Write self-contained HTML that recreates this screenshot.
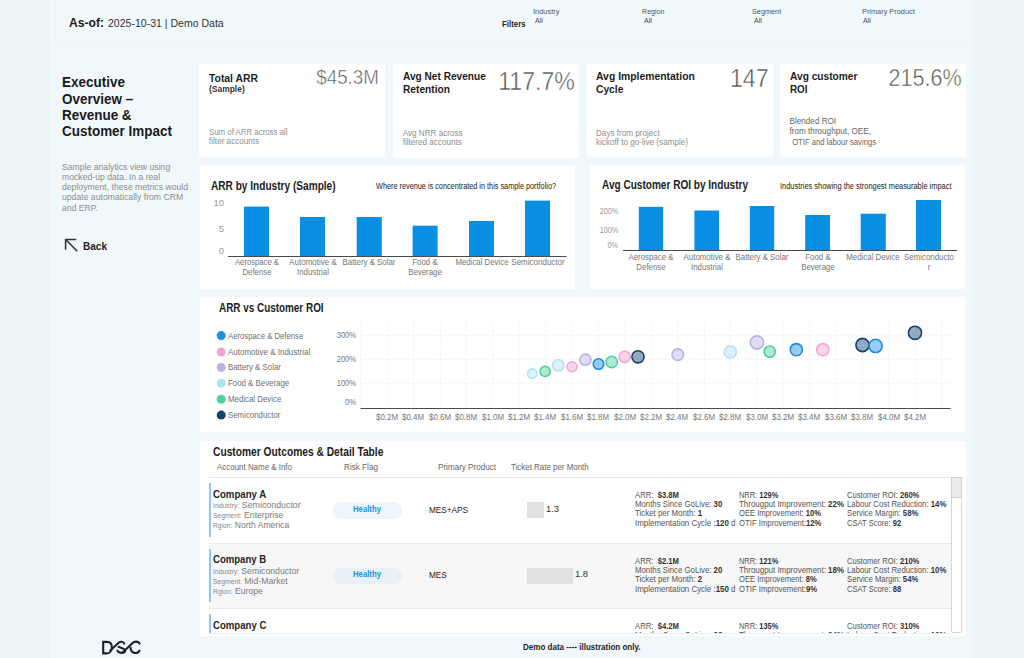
<!DOCTYPE html>
<html><head><meta charset="utf-8"><title>Executive Overview</title>
<style>
*{margin:0;padding:0;box-sizing:border-box}
html,body{width:1024px;height:658px;overflow:hidden}
body{background:#eef5f9;font-family:"Liberation Sans",sans-serif;position:relative}
.main{position:absolute;left:50px;top:0;width:923px;height:658px;background:#f1f8fc}
.hdr{position:absolute;left:54.5px;top:1px;width:916px;height:42px;background:#f2f9fc;border:1px solid #edf3f7;border-top-color:#f0f6fa;border-right-color:#f0f7fb}
.card{position:absolute;background:#fff}
.t{position:absolute;white-space:nowrap;line-height:1;}
.ov{position:absolute;left:0;top:0}
.row{position:absolute;left:208.6px;width:742.8px}
.lb{position:absolute;left:209px;width:1.5px;background:#8cc8f2}
.pill{position:absolute;left:333px;width:69px;height:16.5px;border-radius:8px}
.tbar{position:absolute;left:526.6px;background:#e1e1e1}
</style></head><body>
<div class="main"></div>
<div class="hdr"></div>
<!-- KPI cards -->
<div class="card" style="left:199px;top:64px;width:186px;height:93px"></div>
<div class="card" style="left:393px;top:64px;width:186px;height:94px"></div>
<div class="card" style="left:586.5px;top:64px;width:186px;height:92.7px"></div>
<div class="card" style="left:780px;top:64px;width:186px;height:93px"></div>
<!-- chart cards -->
<div class="card" style="left:199.5px;top:165px;width:375.2px;height:124.4px"></div>
<div class="card" style="left:589.5px;top:165px;width:375.9px;height:124.4px"></div>
<div class="card" style="left:199.5px;top:296.7px;width:765.5px;height:135.7px"></div>
<!-- table card -->
<div class="card" style="left:199.5px;top:441px;width:766px;height:195px"></div>
<div class="row" style="top:632.8px;height:1px;background:#ececec"></div>
<div class="row" style="top:477px;height:1px;background:#e6e6e6"></div>
<div class="row" style="top:543px;height:66px;background:#f7f7f7;border-top:1px solid #e9e9e9;border-bottom:1px solid #e9e9e9"></div>
<div class="lb" style="top:483px;height:53.6px"></div>
<div class="lb" style="top:549px;height:53.4px"></div>
<div class="lb" style="top:614.4px;height:18.6px"></div>
<div class="pill" style="top:502px;background:#edf6fc"></div>
<div class="pill" style="top:567.5px;background:#e7f1f7"></div>
<div class="tbar" style="top:502.4px;width:17px;height:15.2px"></div>
<div class="tbar" style="top:568.3px;width:46.4px;height:15.4px"></div>
<!-- scrollbar -->
<div style="position:absolute;left:951.4px;top:476.9px;width:10.5px;height:156.4px;border:1px solid #d6d6d6;background:#fff;border-radius:2px"></div>
<div style="position:absolute;left:951.4px;top:476.9px;width:10.5px;height:21px;border:1px solid #cfcfcf;background:#ececec"></div>
<svg class="ov" width="1024" height="658" viewBox="0 0 1024 658"><rect x="244.00" y="206.60" width="25.00" height="49.90" fill="#088ee2" /><rect x="300.00" y="217.00" width="25.00" height="39.50" fill="#088ee2" /><rect x="356.70" y="217.00" width="25.10" height="39.50" fill="#088ee2" /><rect x="412.60" y="225.70" width="25.00" height="30.80" fill="#088ee2" /><rect x="469.00" y="221.00" width="25.00" height="35.50" fill="#088ee2" /><rect x="525.00" y="200.60" width="25.00" height="55.90" fill="#088ee2" /><rect x="228" y="256" width="338.5" height="1" fill="#4a4a4a"/><rect x="638.80" y="206.80" width="24.40" height="43.70" fill="#088ee2" /><rect x="694.40" y="210.50" width="24.60" height="40.00" fill="#088ee2" /><rect x="749.80" y="206.00" width="24.40" height="44.50" fill="#088ee2" /><rect x="805.20" y="215.00" width="24.80" height="35.50" fill="#088ee2" /><rect x="860.70" y="213.70" width="25.10" height="36.80" fill="#088ee2" /><rect x="916.00" y="200.00" width="25.00" height="50.50" fill="#088ee2" /><rect x="623" y="250" width="334" height="1" fill="#4a4a4a"/><path d="M360.90 322.5V408 M387.30 322.5V408 M413.70 322.5V408 M440.10 322.5V408 M466.50 322.5V408 M492.90 322.5V408 M519.30 322.5V408 M545.70 322.5V408 M572.10 322.5V408 M598.50 322.5V408 M624.90 322.5V408 M651.30 322.5V408 M677.70 322.5V408 M704.10 322.5V408 M730.50 322.5V408 M756.90 322.5V408 M783.30 322.5V408 M809.70 322.5V408 M836.10 322.5V408 M862.50 322.5V408 M888.90 322.5V408 M915.30 322.5V408 M941.70 322.5V408 M360.6 335.70H950 M360.6 359.30H950 M360.6 383.10H950" stroke="#e6e6e6" stroke-width="0.8" stroke-dasharray="1.5 2.5" fill="none"/><rect x="360.6" y="408" width="590" height="1" fill="#4a4a4a"/><circle cx="221.2" cy="335.60" r="4.5" fill="#1a8ee3"/><circle cx="221.2" cy="352.00" r="4.5" fill="#f5a3d9"/><circle cx="221.2" cy="367.50" r="4.5" fill="#b6b3e6"/><circle cx="221.2" cy="383.20" r="4.5" fill="#b3e0f3"/><circle cx="221.2" cy="399.30" r="4.5" fill="#4fd09e"/><circle cx="221.2" cy="415.10" r="4.5" fill="#15426e"/><circle cx="532.30" cy="373.60" r="4.70" fill="#b3e0f3" fill-opacity="0.45" stroke="#b3e0f3" stroke-width="1.6"/><circle cx="545.10" cy="371.40" r="5.10" fill="#4fd09e" fill-opacity="0.45" stroke="#4fd09e" stroke-width="1.6"/><circle cx="558.30" cy="365.40" r="5.60" fill="#b3e0f3" fill-opacity="0.45" stroke="#b3e0f3" stroke-width="1.6"/><circle cx="572.00" cy="366.70" r="4.90" fill="#f5a3d9" fill-opacity="0.45" stroke="#f5a3d9" stroke-width="1.6"/><circle cx="585.40" cy="359.70" r="5.60" fill="#b6b3e6" fill-opacity="0.45" stroke="#b6b3e6" stroke-width="1.6"/><circle cx="598.50" cy="364.10" r="5.30" fill="#1a8ee3" fill-opacity="0.45" stroke="#1a8ee3" stroke-width="1.6"/><circle cx="611.70" cy="362.00" r="5.60" fill="#4fd09e" fill-opacity="0.45" stroke="#4fd09e" stroke-width="1.6"/><circle cx="624.70" cy="356.80" r="5.60" fill="#f5a3d9" fill-opacity="0.45" stroke="#f5a3d9" stroke-width="1.6"/><circle cx="638.00" cy="356.80" r="6.10" fill="#15426e" fill-opacity="0.45" stroke="#15426e" stroke-width="1.6"/><circle cx="677.80" cy="354.70" r="5.80" fill="#b6b3e6" fill-opacity="0.45" stroke="#b6b3e6" stroke-width="1.6"/><circle cx="730.30" cy="351.90" r="6.10" fill="#b3e0f3" fill-opacity="0.45" stroke="#b3e0f3" stroke-width="1.6"/><circle cx="756.90" cy="342.50" r="6.60" fill="#b6b3e6" fill-opacity="0.45" stroke="#b6b3e6" stroke-width="1.6"/><circle cx="769.70" cy="351.60" r="5.60" fill="#4fd09e" fill-opacity="0.45" stroke="#4fd09e" stroke-width="1.6"/><circle cx="796.30" cy="349.70" r="6.10" fill="#1a8ee3" fill-opacity="0.45" stroke="#1a8ee3" stroke-width="1.6"/><circle cx="822.80" cy="349.70" r="6.10" fill="#f5a3d9" fill-opacity="0.45" stroke="#f5a3d9" stroke-width="1.6"/><circle cx="862.50" cy="345.00" r="6.60" fill="#15426e" fill-opacity="0.45" stroke="#15426e" stroke-width="1.6"/><circle cx="875.60" cy="345.90" r="6.60" fill="#1a8ee3" fill-opacity="0.45" stroke="#1a8ee3" stroke-width="1.6"/><circle cx="915.00" cy="332.80" r="6.60" fill="#15426e" fill-opacity="0.45" stroke="#15426e" stroke-width="1.6"/></svg>
<!-- back arrow -->
<svg class="ov" style="left:60px;top:234px" width="24" height="22" viewBox="0 0 24 22"><path d="M5.6 15.7V5.5H16.2M5.9 5.8L17.3 17.2" stroke="#333" stroke-width="1.6" fill="none"/></svg>
<!-- logo -->
<svg class="ov" style="left:90px;top:630px" width="60" height="28" viewBox="90 630 60 28"><g stroke="#1c222b" stroke-width="2.1" fill="none" stroke-linecap="round"><path d="M103.2 653.4V641.9H107C110.2 641.9 111.9 644.3 111.9 647.4C111.9 650.8 109.8 653.4 106.6 653.4H103.2Z" stroke-linecap="butt"/><path d="M110.3 650.6L118.6 642.8C120.2 641.4 122.9 641.2 124.2 643.6"/><path d="M118.6 646.8L123.6 648.9C126 650 125.6 652.9 122 652.9C119.8 652.9 118.2 652 117.5 650.7"/><path d="M122.6 652.4L132.6 642.9C134.6 641 138.3 641.1 139.6 643.6"/><path d="M130.6 647.6C130.4 650.8 132.6 653 135.4 653C137.4 653 138.8 652 139.5 650.7"/></g></svg>
<div class="t" id="t0" style="top:16.57px;font-size:12.79px;font-weight:700;color:#1b1b1b;left:69.00px;transform:scaleX(0.9479);transform-origin:left;">As-of:</div>
<div class="t" id="t1" style="top:18.54px;font-size:10.47px;font-weight:400;color:#333;left:107.80px;transform:scaleX(1.0057);transform-origin:left;">2025-10-31 | Demo Data</div>
<div class="t" id="t2" style="top:20.37px;font-size:9.01px;font-weight:700;color:#252525;left:502.00px;transform:scaleX(0.8736);transform-origin:left;">Filters</div>
<div class="t" id="t3" style="top:8.82px;font-size:6.83px;font-weight:400;color:#555;left:533.30px;transform:scaleX(1.0866);transform-origin:left;">Industry</div>
<div class="t" id="t4" style="top:18.02px;font-size:6.83px;font-weight:400;color:#444;left:534.50px;transform:scaleX(1.0272);transform-origin:left;">All</div>
<div class="t" id="t5" style="top:8.82px;font-size:6.83px;font-weight:400;color:#555;left:642.10px;transform:scaleX(1.0397);transform-origin:left;">Region</div>
<div class="t" id="t6" style="top:18.02px;font-size:6.83px;font-weight:400;color:#444;left:644.00px;transform:scaleX(1.0272);transform-origin:left;">All</div>
<div class="t" id="t7" style="top:8.82px;font-size:6.83px;font-weight:400;color:#555;left:752.10px;transform:scaleX(1.0679);transform-origin:left;">Segment</div>
<div class="t" id="t8" style="top:18.02px;font-size:6.83px;font-weight:400;color:#444;left:753.70px;transform:scaleX(1.0272);transform-origin:left;">All</div>
<div class="t" id="t9" style="top:8.82px;font-size:6.83px;font-weight:400;color:#555;left:861.60px;transform:scaleX(1.0765);transform-origin:left;">Primary Product</div>
<div class="t" id="t10" style="top:18.02px;font-size:6.83px;font-weight:400;color:#444;left:863.00px;transform:scaleX(1.0272);transform-origin:left;">All</div>
<div class="t" id="t11" style="top:74.74px;font-size:14.24px;font-weight:700;color:#1a1a1a;left:62.00px;transform:scaleX(0.9460);transform-origin:left;">Executive</div>
<div class="t" id="t12" style="top:91.64px;font-size:14.24px;font-weight:700;color:#1a1a1a;left:62.00px;transform:scaleX(0.9460);transform-origin:left;">Overview –</div>
<div class="t" id="t13" style="top:108.44px;font-size:14.24px;font-weight:700;color:#1a1a1a;left:62.00px;transform:scaleX(0.9460);transform-origin:left;">Revenue &amp;</div>
<div class="t" id="t14" style="top:124.24px;font-size:14.24px;font-weight:700;color:#1a1a1a;left:62.00px;transform:scaleX(0.9460);transform-origin:left;">Customer Impact</div>
<div class="t" id="t15" style="top:162.73px;font-size:9.30px;font-weight:400;color:#8c8c8c;left:61.60px;transform:scaleX(0.9306);transform-origin:left;">Sample analytics view using</div>
<div class="t" id="t16" style="top:172.53px;font-size:9.30px;font-weight:400;color:#8c8c8c;left:61.60px;transform:scaleX(0.9306);transform-origin:left;">mocked-up data. In a real</div>
<div class="t" id="t17" style="top:183.23px;font-size:9.30px;font-weight:400;color:#8c8c8c;left:61.60px;transform:scaleX(0.9306);transform-origin:left;">deployment, these metrics would</div>
<div class="t" id="t18" style="top:193.33px;font-size:9.30px;font-weight:400;color:#8c8c8c;left:61.60px;transform:scaleX(0.9306);transform-origin:left;">update automatically from CRM</div>
<div class="t" id="t19" style="top:203.83px;font-size:9.30px;font-weight:400;color:#8c8c8c;left:61.60px;transform:scaleX(0.9306);transform-origin:left;">and ERP.</div>
<div class="t" id="t20" style="top:240.16px;font-size:11.63px;font-weight:700;color:#222;left:82.60px;transform:scaleX(0.8634);transform-origin:left;">Back</div>
<div class="t" id="t21" style="top:72.83px;font-size:11.19px;font-weight:700;color:#1c1c1c;left:209.00px;transform:scaleX(0.9256);transform-origin:left;">Total ARR</div>
<div class="t" id="t22" style="top:67.17px;font-size:20.35px;font-weight:400;color:#505050;right:645.40px;transform:scaleX(0.9210);transform-origin:right;-webkit-text-stroke:0.5px #fff;paint-order:normal;">$45.3M</div>
<div class="t" id="t23" style="top:128.71px;font-size:8.14px;font-weight:400;color:#8f8f8f;left:209.00px;transform:scaleX(0.9658);transform-origin:left;">Sum of ARR across all</div>
<div class="t" id="t24" style="top:138.11px;font-size:8.14px;font-weight:400;color:#8f8f8f;left:209.00px;">filter accounts</div>
<div class="t" id="t25" style="top:71.33px;font-size:11.19px;font-weight:700;color:#1c1c1c;left:402.70px;transform:scaleX(0.9038);transform-origin:left;">Avg Net Revenue</div>
<div class="t" id="t26" style="top:83.53px;font-size:11.19px;font-weight:700;color:#1c1c1c;left:402.70px;transform:scaleX(0.9090);transform-origin:left;">Retention</div>
<div class="t" id="t27" style="top:68.15px;font-size:26.16px;font-weight:400;color:#505050;right:449.40px;transform:scaleX(0.8827);transform-origin:right;-webkit-text-stroke:0.5px #fff;paint-order:normal;">117.7%</div>
<div class="t" id="t28" style="top:129.51px;font-size:8.14px;font-weight:400;color:#8f8f8f;left:402.70px;">Avg NRR across</div>
<div class="t" id="t29" style="top:138.91px;font-size:8.14px;font-weight:400;color:#8f8f8f;left:402.70px;">filtered accounts</div>
<div class="t" id="t30" style="top:71.33px;font-size:11.19px;font-weight:700;color:#1c1c1c;left:596.00px;transform:scaleX(0.9286);transform-origin:left;">Avg Implementation</div>
<div class="t" id="t31" style="top:83.53px;font-size:11.19px;font-weight:700;color:#1c1c1c;left:596.00px;transform:scaleX(0.9176);transform-origin:left;">Cycle</div>
<div class="t" id="t32" style="top:64.85px;font-size:26.16px;font-weight:400;color:#505050;right:255.80px;transform:scaleX(0.8868);transform-origin:right;-webkit-text-stroke:0.5px #fff;paint-order:normal;">147</div>
<div class="t" id="t33" style="top:129.51px;font-size:8.14px;font-weight:400;color:#8f8f8f;left:596.00px;">Days from project</div>
<div class="t" id="t34" style="top:138.91px;font-size:8.14px;font-weight:400;color:#8f8f8f;left:596.00px;">kickoff to go-live (sample)</div>
<div class="t" id="t35" style="top:71.33px;font-size:11.19px;font-weight:700;color:#1c1c1c;left:789.60px;transform:scaleX(0.9097);transform-origin:left;">Avg customer</div>
<div class="t" id="t36" style="top:83.53px;font-size:11.19px;font-weight:700;color:#1c1c1c;left:789.60px;transform:scaleX(0.8798);transform-origin:left;">ROI</div>
<div class="t" id="t37" style="top:65.68px;font-size:24.71px;font-weight:400;color:#505050;right:62.50px;transform:scaleX(0.8735);transform-origin:right;-webkit-text-stroke:0.5px #fff;paint-order:normal;">215.6%</div>
<div class="t" id="t38" style="top:118.21px;font-size:8.14px;font-weight:400;color:#666;left:789.60px;">Blended ROI</div>
<div class="t" id="t39" style="top:128.46px;font-size:8.14px;font-weight:400;color:#666;left:789.60px;">from throughput, OEE,</div>
<div class="t" id="t40" style="top:138.71px;font-size:8.14px;font-weight:400;color:#666;left:789.60px;transform:scaleX(0.9426);transform-origin:left;">&nbsp;OTIF&nbsp;and&nbsp;labour&nbsp;savings</div>
<div class="t" id="t41" style="top:84.82px;font-size:8.72px;font-weight:700;color:#333;left:209.00px;transform:scaleX(0.9694);transform-origin:left;">(Sample)</div>
<div class="t" id="t42" style="top:178.93px;font-size:13.08px;font-weight:700;color:#1c1c1c;left:211.40px;transform:scaleX(0.7723);transform-origin:left;">ARR by Industry (Sample)</div>
<div class="t" id="t43" style="top:183.11px;font-size:8.14px;font-weight:400;color:#222;left:375.90px;transform:scaleX(0.8976);transform-origin:left;">Where revenue is concentrated in this sample portfolio?</div>
<div class="t" id="t44" style="top:198.30px;font-size:9.45px;font-weight:400;color:#999;right:800.00px;">10</div>
<div class="t" id="t45" style="top:224.30px;font-size:9.45px;font-weight:400;color:#999;right:800.00px;">5</div>
<div class="t" id="t46" style="top:245.60px;font-size:9.45px;font-weight:400;color:#999;right:800.00px;">0</div>
<div class="t" id="t47" style="top:258.17px;font-size:9.01px;font-weight:400;color:#777;left:256.50px;transform:translateX(-50%) scaleX(0.8539);transform-origin:50% 0;">Aerospace &amp;</div>
<div class="t" id="t48" style="top:267.77px;font-size:9.01px;font-weight:400;color:#777;left:256.50px;transform:translateX(-50%) scaleX(0.8708);transform-origin:50% 0;">Defense</div>
<div class="t" id="t49" style="top:258.17px;font-size:9.01px;font-weight:400;color:#777;left:312.50px;transform:translateX(-50%) scaleX(0.8929);transform-origin:50% 0;">Automotive &amp;</div>
<div class="t" id="t50" style="top:267.77px;font-size:9.01px;font-weight:400;color:#777;left:312.50px;transform:translateX(-50%) scaleX(0.8748);transform-origin:50% 0;">Industrial</div>
<div class="t" id="t51" style="top:258.17px;font-size:9.01px;font-weight:400;color:#777;left:369.25px;transform:translateX(-50%) scaleX(0.8748);transform-origin:50% 0;">Battery &amp; Solar</div>
<div class="t" id="t52" style="top:258.17px;font-size:9.01px;font-weight:400;color:#777;left:425.10px;transform:translateX(-50%) scaleX(0.8748);transform-origin:50% 0;">Food &amp;</div>
<div class="t" id="t53" style="top:267.77px;font-size:9.01px;font-weight:400;color:#777;left:425.10px;transform:translateX(-50%) scaleX(0.8748);transform-origin:50% 0;">Beverage</div>
<div class="t" id="t54" style="top:258.17px;font-size:9.01px;font-weight:400;color:#777;left:481.50px;transform:translateX(-50%) scaleX(0.8684);transform-origin:50% 0;">Medical Device</div>
<div class="t" id="t55" style="top:258.17px;font-size:9.01px;font-weight:400;color:#777;left:537.50px;transform:translateX(-50%) scaleX(0.8879);transform-origin:50% 0;">Semiconductor</div>
<div class="t" id="t56" style="top:178.72px;font-size:12.50px;font-weight:700;color:#1c1c1c;left:601.80px;transform:scaleX(0.8043);transform-origin:left;">Avg Customer ROI by Industry</div>
<div class="t" id="t57" style="top:182.51px;font-size:8.14px;font-weight:400;color:#222;left:779.50px;transform:scaleX(0.9150);transform-origin:left;">Industries showing the strongest measurable impact</div>
<div class="t" id="t58" style="top:207.27px;font-size:9.01px;font-weight:400;color:#999;right:406.20px;transform:scaleX(0.7989);transform-origin:right;">200%</div>
<div class="t" id="t59" style="top:226.37px;font-size:9.01px;font-weight:400;color:#999;right:406.20px;transform:scaleX(0.7989);transform-origin:right;">100%</div>
<div class="t" id="t60" style="top:240.77px;font-size:9.01px;font-weight:400;color:#999;right:406.20px;transform:scaleX(0.7989);transform-origin:right;">0%</div>
<div class="t" id="t61" style="top:252.57px;font-size:9.01px;font-weight:400;color:#777;left:651.00px;transform:translateX(-50%) scaleX(0.8748);transform-origin:50% 0;">Aerospace &amp;</div>
<div class="t" id="t62" style="top:263.07px;font-size:9.01px;font-weight:400;color:#777;left:651.00px;transform:translateX(-50%) scaleX(0.8748);transform-origin:50% 0;">Defense</div>
<div class="t" id="t63" style="top:252.57px;font-size:9.01px;font-weight:400;color:#777;left:706.70px;transform:translateX(-50%) scaleX(0.8748);transform-origin:50% 0;">Automotive &amp;</div>
<div class="t" id="t64" style="top:263.07px;font-size:9.01px;font-weight:400;color:#777;left:706.70px;transform:translateX(-50%) scaleX(0.8748);transform-origin:50% 0;">Industrial</div>
<div class="t" id="t65" style="top:252.57px;font-size:9.01px;font-weight:400;color:#777;left:762.00px;transform:translateX(-50%) scaleX(0.8748);transform-origin:50% 0;">Battery &amp; Solar</div>
<div class="t" id="t66" style="top:252.57px;font-size:9.01px;font-weight:400;color:#777;left:817.60px;transform:translateX(-50%) scaleX(0.8748);transform-origin:50% 0;">Food &amp;</div>
<div class="t" id="t67" style="top:263.07px;font-size:9.01px;font-weight:400;color:#777;left:817.60px;transform:translateX(-50%) scaleX(0.8748);transform-origin:50% 0;">Beverage</div>
<div class="t" id="t68" style="top:252.57px;font-size:9.01px;font-weight:400;color:#777;left:873.25px;transform:translateX(-50%) scaleX(0.8748);transform-origin:50% 0;">Medical Device</div>
<div class="t" id="t69" style="top:252.57px;font-size:9.01px;font-weight:400;color:#777;left:928.50px;transform:translateX(-50%) scaleX(0.8748);transform-origin:50% 0;">Semiconducto</div>
<div class="t" id="t70" style="top:263.07px;font-size:9.01px;font-weight:400;color:#777;left:928.50px;transform:translateX(-50%) scaleX(0.8748);transform-origin:50% 0;">r</div>
<div class="t" id="t71" style="top:301.66px;font-size:12.21px;font-weight:700;color:#1c1c1c;left:219.40px;transform:scaleX(0.8118);transform-origin:left;">ARR vs Customer ROI</div>
<div class="t" id="t72" style="top:331.57px;font-size:9.01px;font-weight:400;color:#707070;left:228.40px;transform:scaleX(0.8600);transform-origin:left;">Aerospace &amp; Defense</div>
<div class="t" id="t73" style="top:347.97px;font-size:9.01px;font-weight:400;color:#707070;left:228.40px;transform:scaleX(0.8882);transform-origin:left;">Automotive &amp; Industrial</div>
<div class="t" id="t74" style="top:363.47px;font-size:9.01px;font-weight:400;color:#707070;left:228.40px;transform:scaleX(0.8741);transform-origin:left;">Battery &amp; Solar</div>
<div class="t" id="t75" style="top:379.17px;font-size:9.01px;font-weight:400;color:#707070;left:228.40px;transform:scaleX(0.8741);transform-origin:left;">Food &amp; Beverage</div>
<div class="t" id="t76" style="top:395.27px;font-size:9.01px;font-weight:400;color:#707070;left:228.40px;transform:scaleX(0.8741);transform-origin:left;">Medical Device</div>
<div class="t" id="t77" style="top:411.07px;font-size:9.01px;font-weight:400;color:#707070;left:228.40px;transform:scaleX(0.8741);transform-origin:left;">Semiconductor</div>
<div class="t" id="t78" style="top:331.17px;font-size:9.01px;font-weight:400;color:#777;right:668.20px;transform:scaleX(0.8380);transform-origin:right;">300%</div>
<div class="t" id="t79" style="top:354.97px;font-size:9.01px;font-weight:400;color:#777;right:668.20px;transform:scaleX(0.8380);transform-origin:right;">200%</div>
<div class="t" id="t80" style="top:378.77px;font-size:9.01px;font-weight:400;color:#777;right:668.20px;transform:scaleX(0.8380);transform-origin:right;">100%</div>
<div class="t" id="t81" style="top:398.17px;font-size:9.01px;font-weight:400;color:#777;right:668.20px;transform:scaleX(0.8380);transform-origin:right;">0%</div>
<div class="t" id="t82" style="top:413.07px;font-size:9.01px;font-weight:400;color:#777;left:387.00px;transform:translateX(-50%) scaleX(0.8795);transform-origin:50% 0;">$0.2M</div>
<div class="t" id="t83" style="top:413.07px;font-size:9.01px;font-weight:400;color:#777;left:413.40px;transform:translateX(-50%) scaleX(0.8795);transform-origin:50% 0;">$0.4M</div>
<div class="t" id="t84" style="top:413.07px;font-size:9.01px;font-weight:400;color:#777;left:439.80px;transform:translateX(-50%) scaleX(0.8795);transform-origin:50% 0;">$0.6M</div>
<div class="t" id="t85" style="top:413.07px;font-size:9.01px;font-weight:400;color:#777;left:466.20px;transform:translateX(-50%) scaleX(0.8795);transform-origin:50% 0;">$0.8M</div>
<div class="t" id="t86" style="top:413.07px;font-size:9.01px;font-weight:400;color:#777;left:492.60px;transform:translateX(-50%) scaleX(0.8795);transform-origin:50% 0;">$1.0M</div>
<div class="t" id="t87" style="top:413.07px;font-size:9.01px;font-weight:400;color:#777;left:519.00px;transform:translateX(-50%) scaleX(0.8795);transform-origin:50% 0;">$1.2M</div>
<div class="t" id="t88" style="top:413.07px;font-size:9.01px;font-weight:400;color:#777;left:545.40px;transform:translateX(-50%) scaleX(0.8795);transform-origin:50% 0;">$1.4M</div>
<div class="t" id="t89" style="top:413.07px;font-size:9.01px;font-weight:400;color:#777;left:571.80px;transform:translateX(-50%) scaleX(0.8795);transform-origin:50% 0;">$1.6M</div>
<div class="t" id="t90" style="top:413.07px;font-size:9.01px;font-weight:400;color:#777;left:598.20px;transform:translateX(-50%) scaleX(0.8795);transform-origin:50% 0;">$1.8M</div>
<div class="t" id="t91" style="top:413.07px;font-size:9.01px;font-weight:400;color:#777;left:624.60px;transform:translateX(-50%) scaleX(0.8795);transform-origin:50% 0;">$2.0M</div>
<div class="t" id="t92" style="top:413.07px;font-size:9.01px;font-weight:400;color:#777;left:651.00px;transform:translateX(-50%) scaleX(0.8795);transform-origin:50% 0;">$2.2M</div>
<div class="t" id="t93" style="top:413.07px;font-size:9.01px;font-weight:400;color:#777;left:677.40px;transform:translateX(-50%) scaleX(0.8795);transform-origin:50% 0;">$2.4M</div>
<div class="t" id="t94" style="top:413.07px;font-size:9.01px;font-weight:400;color:#777;left:703.80px;transform:translateX(-50%) scaleX(0.8795);transform-origin:50% 0;">$2.6M</div>
<div class="t" id="t95" style="top:413.07px;font-size:9.01px;font-weight:400;color:#777;left:730.20px;transform:translateX(-50%) scaleX(0.8795);transform-origin:50% 0;">$2.8M</div>
<div class="t" id="t96" style="top:413.07px;font-size:9.01px;font-weight:400;color:#777;left:756.60px;transform:translateX(-50%) scaleX(0.8795);transform-origin:50% 0;">$3.0M</div>
<div class="t" id="t97" style="top:413.07px;font-size:9.01px;font-weight:400;color:#777;left:783.00px;transform:translateX(-50%) scaleX(0.8795);transform-origin:50% 0;">$3.2M</div>
<div class="t" id="t98" style="top:413.07px;font-size:9.01px;font-weight:400;color:#777;left:809.40px;transform:translateX(-50%) scaleX(0.8795);transform-origin:50% 0;">$3.4M</div>
<div class="t" id="t99" style="top:413.07px;font-size:9.01px;font-weight:400;color:#777;left:835.80px;transform:translateX(-50%) scaleX(0.8795);transform-origin:50% 0;">$3.6M</div>
<div class="t" id="t100" style="top:413.07px;font-size:9.01px;font-weight:400;color:#777;left:862.20px;transform:translateX(-50%) scaleX(0.8795);transform-origin:50% 0;">$3.8M</div>
<div class="t" id="t101" style="top:413.07px;font-size:9.01px;font-weight:400;color:#777;left:888.60px;transform:translateX(-50%) scaleX(0.8795);transform-origin:50% 0;">$4.0M</div>
<div class="t" id="t102" style="top:413.07px;font-size:9.01px;font-weight:400;color:#777;left:915.00px;transform:translateX(-50%) scaleX(0.8795);transform-origin:50% 0;">$4.2M</div>
<div class="t" id="t103" style="top:446.71px;font-size:11.92px;font-weight:700;color:#1c1c1c;left:212.60px;transform:scaleX(0.8595);transform-origin:left;">Customer Outcomes &amp; Detail Table</div>
<div class="t" id="t104" style="top:464.31px;font-size:8.14px;font-weight:400;color:#666;left:217.40px;transform:scaleX(0.9768);transform-origin:left;">Account Name &amp; Info</div>
<div class="t" id="t105" style="top:464.31px;font-size:8.14px;font-weight:400;color:#666;left:361.00px;transform:translateX(-50%);transform-origin:50% 0;">Risk Flag</div>
<div class="t" id="t106" style="top:464.31px;font-size:8.14px;font-weight:400;color:#666;left:437.80px;transform:scaleX(0.9957);transform-origin:left;">Primary Product</div>
<div class="t" id="t107" style="top:464.31px;font-size:8.14px;font-weight:400;color:#666;left:511.30px;transform:scaleX(0.9756);transform-origin:left;">Ticket Rate per Month</div>
<div class="t" id="t108" style="top:489.89px;font-size:10.17px;font-weight:700;color:#252525;left:212.80px;transform:scaleX(0.9489);transform-origin:left;">Company A</div>
<div class="t" id="t109" style="top:501.35px;font-size:9.16px;font-weight:400;color:#777;left:212.80px;transform:scaleX(0.9642);transform-origin:left;"><span style="font-size:0.78em;color:#8a8a8a">Industry:</span><span style="color:#7a7a7a">&nbsp;Semiconductor</span></div>
<div class="t" id="t110" style="top:511.35px;font-size:9.16px;font-weight:400;color:#777;left:212.80px;transform:scaleX(0.9414);transform-origin:left;"><span style="font-size:0.78em;color:#8a8a8a">Segment:</span><span style="color:#7a7a7a">&nbsp;Enterprise</span></div>
<div class="t" id="t111" style="top:521.35px;font-size:9.16px;font-weight:400;color:#777;left:212.80px;transform:scaleX(0.9387);transform-origin:left;"><span style="font-size:0.78em;color:#8a8a8a">Rgion:</span><span style="color:#7a7a7a">&nbsp;North America</span></div>
<div class="t" id="t112" style="top:504.72px;font-size:8.72px;font-weight:700;color:#2193e3;left:367.20px;transform:translateX(-50%) scaleX(0.8889);transform-origin:50% 0;">Healthy</div>
<div class="t" id="t113" style="top:505.63px;font-size:9.30px;font-weight:400;color:#222;left:425.00px;transform:scaleX(0.8843);transform-origin:left;"><span style="font-size:0.6em;vertical-align:0.25em">&middot;</span> MES+APS</div>
<div class="t" id="t114" style="top:504.93px;font-size:9.30px;font-weight:400;color:#333;left:546.00px;">1.3</div>
<div class="t" id="t115" style="top:490.62px;font-size:8.72px;font-weight:400;color:#555;left:634.70px;transform:scaleX(0.8814);transform-origin:left;">ARR:&nbsp; <b style="color:#333">$3.8M</b></div>
<div class="t" id="t116" style="top:499.72px;font-size:8.72px;font-weight:400;color:#555;left:634.70px;transform:scaleX(0.8961);transform-origin:left;">Months Since GoLive: <b style="color:#333">30</b></div>
<div class="t" id="t117" style="top:509.42px;font-size:8.72px;font-weight:400;color:#555;left:634.70px;transform:scaleX(0.9043);transform-origin:left;">Ticket per Month: <b style="color:#333">1</b></div>
<div class="t" id="t118" style="top:518.92px;font-size:8.72px;font-weight:400;color:#555;left:634.70px;transform:scaleX(0.9094);transform-origin:left;">Implementation Cycle :<b style="color:#333">120</b> d<b></b></div>
<div class="t" id="t119" style="top:490.62px;font-size:8.72px;font-weight:400;color:#555;left:738.70px;transform:scaleX(0.8535);transform-origin:left;">NRR: <b style="color:#333">129%</b></div>
<div class="t" id="t120" style="top:499.72px;font-size:8.72px;font-weight:400;color:#555;left:738.70px;transform:scaleX(0.9103);transform-origin:left;">Througput Improvement: <b style="color:#333">22%</b></div>
<div class="t" id="t121" style="top:509.42px;font-size:8.72px;font-weight:400;color:#555;left:738.70px;transform:scaleX(0.8722);transform-origin:left;">OEE Improvement: <b style="color:#333">10%</b></div>
<div class="t" id="t122" style="top:518.92px;font-size:8.72px;font-weight:400;color:#555;left:738.70px;transform:scaleX(0.8868);transform-origin:left;">OTIF Improvement:<b style="color:#333">12%</b></div>
<div class="t" id="t123" style="top:490.62px;font-size:8.72px;font-weight:400;color:#555;left:847.30px;transform:scaleX(0.8736);transform-origin:left;">Customer ROI: <b style="color:#333">260%</b></div>
<div class="t" id="t124" style="top:499.72px;font-size:8.72px;font-weight:400;color:#555;left:847.30px;transform:scaleX(0.8907);transform-origin:left;">Labour Cost Reduction: <b style="color:#333">14%</b></div>
<div class="t" id="t125" style="top:509.42px;font-size:8.72px;font-weight:400;color:#555;left:847.30px;transform:scaleX(0.8862);transform-origin:left;">Service Margin: <b style="color:#333">58%</b></div>
<div class="t" id="t126" style="top:518.92px;font-size:8.72px;font-weight:400;color:#555;left:847.30px;transform:scaleX(0.8697);transform-origin:left;">CSAT Score: <b style="color:#333">92</b></div>
<div class="t" id="t127" style="top:555.39px;font-size:10.17px;font-weight:700;color:#252525;left:212.80px;transform:scaleX(0.9426);transform-origin:left;">Company B</div>
<div class="t" id="t128" style="top:566.85px;font-size:9.16px;font-weight:400;color:#777;left:212.80px;transform:scaleX(0.9481);transform-origin:left;"><span style="font-size:0.78em;color:#8a8a8a">Industry:</span><span style="color:#7a7a7a">&nbsp;Semiconductor</span></div>
<div class="t" id="t129" style="top:576.85px;font-size:9.16px;font-weight:400;color:#777;left:212.80px;transform:scaleX(0.9481);transform-origin:left;"><span style="font-size:0.78em;color:#8a8a8a">Segment:</span><span style="color:#7a7a7a">&nbsp;Mid-Market</span></div>
<div class="t" id="t130" style="top:586.85px;font-size:9.16px;font-weight:400;color:#777;left:212.80px;transform:scaleX(0.9481);transform-origin:left;"><span style="font-size:0.78em;color:#8a8a8a">Rgion:</span><span style="color:#7a7a7a">&nbsp;Europe</span></div>
<div class="t" id="t131" style="top:570.22px;font-size:8.72px;font-weight:700;color:#2193e3;left:367.20px;transform:translateX(-50%) scaleX(0.8889);transform-origin:50% 0;">Healthy</div>
<div class="t" id="t132" style="top:571.13px;font-size:9.30px;font-weight:400;color:#222;left:425.00px;transform:scaleX(0.8843);transform-origin:left;"><span style="font-size:0.6em;vertical-align:0.25em">&middot;</span> MES</div>
<div class="t" id="t133" style="top:570.43px;font-size:9.30px;font-weight:400;color:#333;left:575.00px;">1.8</div>
<div class="t" id="t134" style="top:556.52px;font-size:8.72px;font-weight:400;color:#555;left:634.70px;transform:scaleX(0.8814);transform-origin:left;">ARR:&nbsp; <b style="color:#333">$2.1M</b></div>
<div class="t" id="t135" style="top:565.72px;font-size:8.72px;font-weight:400;color:#555;left:634.70px;transform:scaleX(0.8961);transform-origin:left;">Months Since GoLive: <b style="color:#333">20</b></div>
<div class="t" id="t136" style="top:575.32px;font-size:8.72px;font-weight:400;color:#555;left:634.70px;transform:scaleX(0.9043);transform-origin:left;">Ticket per Month: <b style="color:#333">2</b></div>
<div class="t" id="t137" style="top:584.92px;font-size:8.72px;font-weight:400;color:#555;left:634.70px;transform:scaleX(0.9094);transform-origin:left;">Implementation Cycle :<b style="color:#333">150</b> d<b></b></div>
<div class="t" id="t138" style="top:556.52px;font-size:8.72px;font-weight:400;color:#555;left:738.70px;transform:scaleX(0.8535);transform-origin:left;">NRR: <b style="color:#333">121%</b></div>
<div class="t" id="t139" style="top:565.72px;font-size:8.72px;font-weight:400;color:#555;left:738.70px;transform:scaleX(0.9103);transform-origin:left;">Througput Improvement: <b style="color:#333">18%</b></div>
<div class="t" id="t140" style="top:575.32px;font-size:8.72px;font-weight:400;color:#555;left:738.70px;transform:scaleX(0.8722);transform-origin:left;">OEE Improvement: <b style="color:#333">8%</b></div>
<div class="t" id="t141" style="top:584.92px;font-size:8.72px;font-weight:400;color:#555;left:738.70px;transform:scaleX(0.8868);transform-origin:left;">OTIF Improvement:<b style="color:#333">9%</b></div>
<div class="t" id="t142" style="top:556.52px;font-size:8.72px;font-weight:400;color:#555;left:847.30px;transform:scaleX(0.8736);transform-origin:left;">Customer ROI: <b style="color:#333">210%</b></div>
<div class="t" id="t143" style="top:565.72px;font-size:8.72px;font-weight:400;color:#555;left:847.30px;transform:scaleX(0.8907);transform-origin:left;">Labour Cost Reduction: <b style="color:#333">10%</b></div>
<div class="t" id="t144" style="top:575.32px;font-size:8.72px;font-weight:400;color:#555;left:847.30px;transform:scaleX(0.8862);transform-origin:left;">Service Margin: <b style="color:#333">54%</b></div>
<div class="t" id="t145" style="top:584.92px;font-size:8.72px;font-weight:400;color:#555;left:847.30px;transform:scaleX(0.8697);transform-origin:left;">CSAT Score: <b style="color:#333">88</b></div>
<div class="t" id="t159" style="top:643.42px;font-size:8.72px;font-weight:700;color:#222;left:523.40px;transform:scaleX(0.9208);transform-origin:left;">Demo data ---- illustration only.</div>
<div style="position:absolute;left:0;top:0;width:1024px;height:632.8px;overflow:hidden"><div class="t" id="t146" style="top:621.19px;font-size:10.17px;font-weight:700;color:#252525;left:212.80px;transform:scaleX(0.9458);transform-origin:left;">Company C</div>
<div class="t" id="t147" style="top:622.12px;font-size:8.72px;font-weight:400;color:#555;left:634.70px;transform:scaleX(0.8814);transform-origin:left;">ARR:&nbsp; <b style="color:#333">$4.2M</b></div>
<div class="t" id="t148" style="top:631.32px;font-size:8.72px;font-weight:400;color:#555;left:634.70px;transform:scaleX(0.8961);transform-origin:left;">Months Since GoLive: <b style="color:#333">36</b></div>
<div class="t" id="t149" style="top:641.02px;font-size:8.72px;font-weight:400;color:#555;left:634.70px;transform:scaleX(0.9043);transform-origin:left;">Ticket per Month: <b style="color:#333">1</b></div>
<div class="t" id="t150" style="top:650.52px;font-size:8.72px;font-weight:400;color:#555;left:634.70px;transform:scaleX(0.9094);transform-origin:left;">Implementation Cycle :<b style="color:#333">110</b> d<b></b></div>
<div class="t" id="t151" style="top:622.12px;font-size:8.72px;font-weight:400;color:#555;left:738.70px;transform:scaleX(0.8535);transform-origin:left;">NRR: <b style="color:#333">135%</b></div>
<div class="t" id="t152" style="top:631.32px;font-size:8.72px;font-weight:400;color:#555;left:738.70px;transform:scaleX(0.9103);transform-origin:left;">Througput Improvement: <b style="color:#333">24%</b></div>
<div class="t" id="t153" style="top:641.02px;font-size:8.72px;font-weight:400;color:#555;left:738.70px;transform:scaleX(0.8722);transform-origin:left;">OEE Improvement: <b style="color:#333">12%</b></div>
<div class="t" id="t154" style="top:650.52px;font-size:8.72px;font-weight:400;color:#555;left:738.70px;transform:scaleX(0.8868);transform-origin:left;">OTIF Improvement:<b style="color:#333">14%</b></div>
<div class="t" id="t155" style="top:622.12px;font-size:8.72px;font-weight:400;color:#555;left:847.30px;transform:scaleX(0.8736);transform-origin:left;">Customer ROI: <b style="color:#333">310%</b></div>
<div class="t" id="t156" style="top:631.32px;font-size:8.72px;font-weight:400;color:#555;left:847.30px;transform:scaleX(0.8907);transform-origin:left;">Labour Cost Reduction: <b style="color:#333">16%</b></div>
<div class="t" id="t157" style="top:641.02px;font-size:8.72px;font-weight:400;color:#555;left:847.30px;transform:scaleX(0.8862);transform-origin:left;">Service Margin: <b style="color:#333">61%</b></div>
<div class="t" id="t158" style="top:650.52px;font-size:8.72px;font-weight:400;color:#555;left:847.30px;transform:scaleX(0.8697);transform-origin:left;">CSAT Score: <b style="color:#333">94</b></div></div>
</body></html>
